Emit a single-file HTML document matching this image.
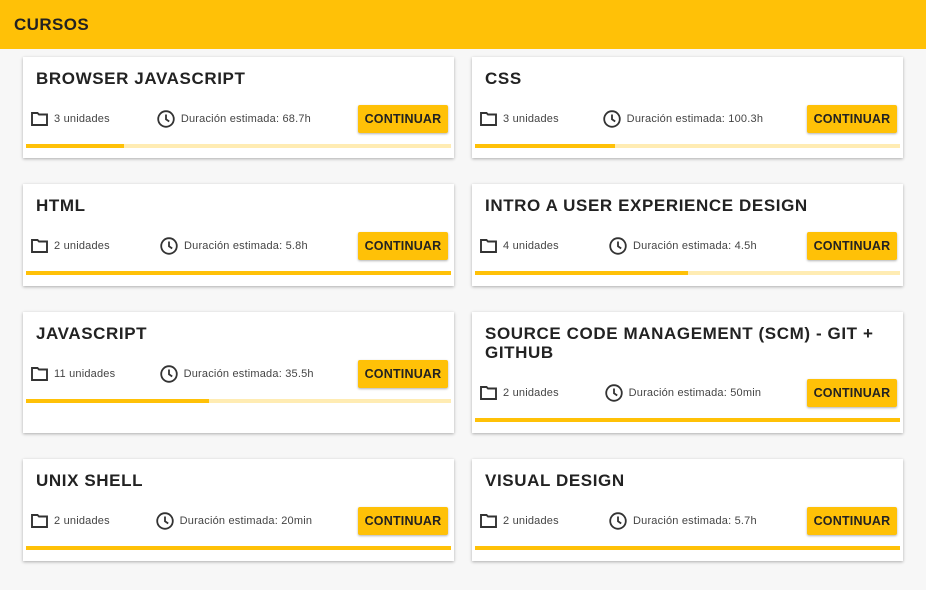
<!DOCTYPE html>
<html><head><meta charset="utf-8"><style>
*{box-sizing:border-box;margin:0;padding:0}
body{width:926px;height:590px;background:#f7f7f7;font-family:"Liberation Sans",sans-serif;overflow:hidden;position:relative}
.hdr{height:49px;background:#ffc107;padding-left:14px;font-weight:bold;font-size:17px;line-height:49px;color:#222;letter-spacing:.4px}
.grid{position:absolute;left:23px;top:57px;display:grid;grid-template-columns:431px 431px;column-gap:18px;row-gap:26px;grid-template-rows:101px 102px 121px 102px}
.card{background:#fff;box-shadow:0 1px 3px rgba(0,0,0,.3);padding:12px 0 10px;display:flex;flex-direction:column}
.t{font-weight:bold;font-size:17px;line-height:19px;color:#222;padding:0 10px 0 13px;letter-spacing:.6px}
.m{margin-top:17px;display:flex;justify-content:space-between;align-items:center;padding:0 6px 0 8px;height:28px;font-size:11px;color:#444;letter-spacing:.2px}
.g{display:flex;align-items:center;gap:6px}
.g svg{display:block}
.b{width:90px;height:28px;background:#ffc107;font-weight:bold;font-size:12.5px;color:#222;display:flex;align-items:center;justify-content:center;box-shadow:0 1px 2px rgba(0,0,0,.3);border-radius:2px}
.bar{margin:11px 3px 0;height:4px;background:#ffecb3}
.bar i{display:block;height:4px;background:#ffc107}
</style></head><body>
<div class="hdr">CURSOS</div>
<div class="grid">

<div class="card"><div class="t">BROWSER JAVASCRIPT</div><div class="m"><div class="g"><svg width="17" height="14" viewBox="0 0 17 14"><path d="M1 1h5.5l1.5 1.5H16v10.5H1z" fill="none" stroke="#333" stroke-width="1.9"/></svg>3 unidades</div><div class="g"><svg width="18" height="18" viewBox="0 0 18 18"><circle cx="9" cy="9" r="7.8" fill="none" stroke="#333" stroke-width="1.8"/><path d="M9 4.5v4.8l3.2 2.2" fill="none" stroke="#333" stroke-width="1.8"/></svg>Duración estimada: 68.7h</div><div class="b">CONTINUAR</div></div><div class="bar"><i style="width:23%"></i></div></div>

<div class="card"><div class="t">CSS</div><div class="m"><div class="g"><svg width="17" height="14" viewBox="0 0 17 14"><path d="M1 1h5.5l1.5 1.5H16v10.5H1z" fill="none" stroke="#333" stroke-width="1.9"/></svg>3 unidades</div><div class="g"><svg width="18" height="18" viewBox="0 0 18 18"><circle cx="9" cy="9" r="7.8" fill="none" stroke="#333" stroke-width="1.8"/><path d="M9 4.5v4.8l3.2 2.2" fill="none" stroke="#333" stroke-width="1.8"/></svg>Duración estimada: 100.3h</div><div class="b">CONTINUAR</div></div><div class="bar"><i style="width:33%"></i></div></div>

<div class="card"><div class="t">HTML</div><div class="m"><div class="g"><svg width="17" height="14" viewBox="0 0 17 14"><path d="M1 1h5.5l1.5 1.5H16v10.5H1z" fill="none" stroke="#333" stroke-width="1.9"/></svg>2 unidades</div><div class="g"><svg width="18" height="18" viewBox="0 0 18 18"><circle cx="9" cy="9" r="7.8" fill="none" stroke="#333" stroke-width="1.8"/><path d="M9 4.5v4.8l3.2 2.2" fill="none" stroke="#333" stroke-width="1.8"/></svg>Duración estimada: 5.8h</div><div class="b">CONTINUAR</div></div><div class="bar"><i style="width:100%"></i></div></div>

<div class="card"><div class="t">INTRO A USER EXPERIENCE DESIGN</div><div class="m"><div class="g"><svg width="17" height="14" viewBox="0 0 17 14"><path d="M1 1h5.5l1.5 1.5H16v10.5H1z" fill="none" stroke="#333" stroke-width="1.9"/></svg>4 unidades</div><div class="g"><svg width="18" height="18" viewBox="0 0 18 18"><circle cx="9" cy="9" r="7.8" fill="none" stroke="#333" stroke-width="1.8"/><path d="M9 4.5v4.8l3.2 2.2" fill="none" stroke="#333" stroke-width="1.8"/></svg>Duración estimada: 4.5h</div><div class="b">CONTINUAR</div></div><div class="bar"><i style="width:50%"></i></div></div>

<div class="card"><div class="t">JAVASCRIPT</div><div class="m"><div class="g"><svg width="17" height="14" viewBox="0 0 17 14"><path d="M1 1h5.5l1.5 1.5H16v10.5H1z" fill="none" stroke="#333" stroke-width="1.9"/></svg>11 unidades</div><div class="g"><svg width="18" height="18" viewBox="0 0 18 18"><circle cx="9" cy="9" r="7.8" fill="none" stroke="#333" stroke-width="1.8"/><path d="M9 4.5v4.8l3.2 2.2" fill="none" stroke="#333" stroke-width="1.8"/></svg>Duración estimada: 35.5h</div><div class="b">CONTINUAR</div></div><div class="bar"><i style="width:43%"></i></div></div>

<div class="card"><div class="t">SOURCE CODE MANAGEMENT (SCM) - GIT + GITHUB</div><div class="m"><div class="g"><svg width="17" height="14" viewBox="0 0 17 14"><path d="M1 1h5.5l1.5 1.5H16v10.5H1z" fill="none" stroke="#333" stroke-width="1.9"/></svg>2 unidades</div><div class="g"><svg width="18" height="18" viewBox="0 0 18 18"><circle cx="9" cy="9" r="7.8" fill="none" stroke="#333" stroke-width="1.8"/><path d="M9 4.5v4.8l3.2 2.2" fill="none" stroke="#333" stroke-width="1.8"/></svg>Duración estimada: 50min</div><div class="b">CONTINUAR</div></div><div class="bar"><i style="width:100%"></i></div></div>

<div class="card"><div class="t">UNIX SHELL</div><div class="m"><div class="g"><svg width="17" height="14" viewBox="0 0 17 14"><path d="M1 1h5.5l1.5 1.5H16v10.5H1z" fill="none" stroke="#333" stroke-width="1.9"/></svg>2 unidades</div><div class="g"><svg width="18" height="18" viewBox="0 0 18 18"><circle cx="9" cy="9" r="7.8" fill="none" stroke="#333" stroke-width="1.8"/><path d="M9 4.5v4.8l3.2 2.2" fill="none" stroke="#333" stroke-width="1.8"/></svg>Duración estimada: 20min</div><div class="b">CONTINUAR</div></div><div class="bar"><i style="width:100%"></i></div></div>

<div class="card"><div class="t">VISUAL DESIGN</div><div class="m"><div class="g"><svg width="17" height="14" viewBox="0 0 17 14"><path d="M1 1h5.5l1.5 1.5H16v10.5H1z" fill="none" stroke="#333" stroke-width="1.9"/></svg>2 unidades</div><div class="g"><svg width="18" height="18" viewBox="0 0 18 18"><circle cx="9" cy="9" r="7.8" fill="none" stroke="#333" stroke-width="1.8"/><path d="M9 4.5v4.8l3.2 2.2" fill="none" stroke="#333" stroke-width="1.8"/></svg>Duración estimada: 5.7h</div><div class="b">CONTINUAR</div></div><div class="bar"><i style="width:100%"></i></div></div>

</div>
</body></html>
